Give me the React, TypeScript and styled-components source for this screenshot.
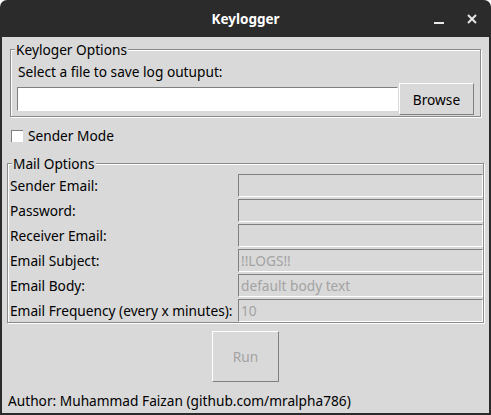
import React from "react";
import styled, { createGlobalStyle } from "styled-components";

const Global = createGlobalStyle`
  html, body { margin: 0; padding: 0; background: #ffffff; }
  body { font-family: "Noto Sans", "DejaVu Sans", sans-serif; font-size: 13.7px; }
  * { box-sizing: border-box; }
`;

const Window = styled.div`
  width: 491px;
  height: 415px;
  background: #2b2b2b;
  border-radius: 7px 7px 0 0;
  display: flex;
  flex-direction: column;
  padding: 0 2px 2px 2px;
  overflow: hidden;
`;

const TitleBar = styled.div`
  height: 37px;
  flex: none;
  display: flex;
  align-items: center;
  justify-content: center;
  position: relative;
  color: #ffffff;
  font-weight: bold;
  font-size: 13.5px;
`;

const TitleButtons = styled.div`
  position: absolute;
  right: 12px;
  top: 0;
  height: 37px;
  display: flex;
  align-items: center;
  gap: 23px;
`;

const Content = styled.div`
  flex: 1;
  background: #d9d9d9;
  display: flex;
  flex-direction: column;
  color: #000;
`;

const Frame = styled.div<{ $mt: number; $mx: number }>`
  position: relative;
  margin: ${(p) => p.$mt}px ${(p) => p.$mx}px 0 ${(p) => p.$mx}px;
  border: 1px solid #8a8a8a;
  box-shadow: inset 1px 1px 0 #ffffff, 1px 1px 0 #ffffff;
`;

const FrameTitle = styled.span<{ $left: number }>`
  position: absolute;
  top: -9px;
  left: ${(p) => p.$left}px;
  background: #d9d9d9;
  padding: 0 1px;
  line-height: 17px;
`;

const FileSection = styled.div`
  display: flex;
  flex-direction: column;
  gap: 2px;
  padding: 13px 6px 1px 6px;
`;

const Label = styled.div<{ $disabled?: boolean }>`
  line-height: 18px;
  white-space: nowrap;
  color: ${(p) => (p.$disabled ? "#a3a3a3" : "#000")};
`;

const InsetLabel = styled(Label)`
  margin-left: 1px;
`;

const FileRow = styled.div`
  display: flex;
  align-items: center;
  gap: 1px;
`;

const Entry = styled.div<{ $disabled?: boolean }>`
  height: 23px;
  flex: 1;
  background: ${(p) => (p.$disabled ? "#d9d9d9" : "#ffffff")};
  color: #a3a3a3;
  border-top: 1px solid #7f7f7f;
  border-left: 1px solid #7f7f7f;
  border-bottom: 1px solid #ffffff;
  border-right: 1px solid #ffffff;
  padding-left: 2px;
  line-height: 21px;
  white-space: nowrap;
  overflow: hidden;
`;

const FileEntry = styled(Entry)`
  height: 24px;
`;

const Button = styled.div<{ $w: number; $h: number; $disabled?: boolean }>`
  width: ${(p) => p.$w}px;
  height: ${(p) => p.$h}px;
  flex: none;
  display: flex;
  align-items: center;
  justify-content: center;
  background: #d9d9d9;
  color: ${(p) => (p.$disabled ? "#a3a3a3" : "#000")};
  border-top: 1px solid #ffffff;
  border-left: 1px solid #ffffff;
  border-bottom: 1px solid #7f7f7f;
  border-right: 1px solid #7f7f7f;
`;

const CheckRow = styled.div`
  display: flex;
  align-items: center;
  height: 20px;
  margin: 9px 0 0 9px;
  gap: 5px;
`;

const CheckBox = styled.div`
  width: 12px;
  height: 12px;
  background: #ffffff;
  border-top: 1px solid #7f7f7f;
  border-left: 1px solid #7f7f7f;
`;

const MailGrid = styled.div`
  display: grid;
  grid-template-columns: 230px 1fr;
  row-gap: 2px;
  padding: 10px 0 0 0;
  align-items: center;
`;

const RowLabel = styled(Label)`
  padding-left: 2px;
`;

const RunWrap = styled.div`
  display: flex;
  justify-content: center;
  margin-top: 8px;
`;

const Author = styled(Label)`
  margin: 10px 0 0 6px;
`;

const rows: { label: string; value?: string }[] = [
  { label: "Sender Email:" },
  { label: "Password:" },
  { label: "Receiver Email:" },
  { label: "Email Subject:", value: "!!LOGS!!" },
  { label: "Email Body:", value: "default body text" },
  { label: "Email Frequency (every x minutes):", value: "10" },
];

export default function App() {
  return (
    <>
      <Global />
      <Window>
        <TitleBar>
          Keylogger
          <TitleButtons>
            <svg width="10" height="14" viewBox="0 0 10 14">
              <line x1="0" y1="11" x2="10" y2="11" stroke="#e8e8e8" strokeWidth="2" />
            </svg>
            <svg width="10" height="10" viewBox="0 0 10 10">
              <line x1="1" y1="1" x2="9" y2="9" stroke="#e8e8e8" strokeWidth="2" />
              <line x1="9" y1="1" x2="1" y2="9" stroke="#e8e8e8" strokeWidth="2" />
            </svg>
          </TitleButtons>
        </TitleBar>
        <Content>
          <Frame $mt={12} $mx={8}>
            <FrameTitle $left={4}>Keyloger Options</FrameTitle>
            <FileSection>
              <InsetLabel>Select a file to save log outuput:</InsetLabel>
              <FileRow>
                <FileEntry />
                <Button $w={75} $h={32}>Browse</Button>
              </FileRow>
            </FileSection>
          </Frame>
          <CheckRow>
            <CheckBox />
            <Label>Sender Mode</Label>
          </CheckRow>
          <Frame $mt={17} $mx={5}>
            <FrameTitle $left={4}>Mail Options</FrameTitle>
            <MailGrid>
              {rows.map((r) => (
                <React.Fragment key={r.label}>
                  <RowLabel>{r.label}</RowLabel>
                  <Entry $disabled>{r.value ?? ""}</Entry>
                </React.Fragment>
              ))}
            </MailGrid>
          </Frame>
          <RunWrap>
            <Button $w={67} $h={51} $disabled>Run</Button>
          </RunWrap>
          <Author>Author: Muhammad Faizan (github.com/mralpha786)</Author>
        </Content>
      </Window>
    </>
  );
}
